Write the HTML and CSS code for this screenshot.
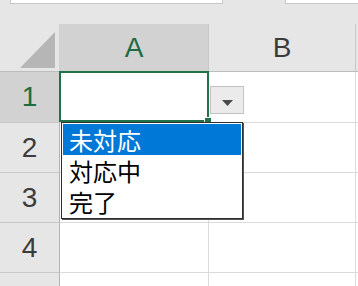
FILE: index.html
```html
<!DOCTYPE html>
<html>
  <head>
    <meta charset="utf-8" />
    <title>Sheet</title>
    <link rel="stylesheet" href="styles.css">
  </head>
  <body>
    <div class="toolbar">
      <div class="namebox"></div>
      <div class="formula"></div>
    </div>
    <div class="sheet">
      <div class="corner"><div class="corner-tri"></div></div>
      <div class="colhead active">A</div>
      <div class="colhead">B</div>
      <div class="colhead rest"></div>

      <div class="rowhead active">1</div>
      <div class="cell"></div>
      <div class="cell"></div>
      <div class="cell rest"></div>

      <div class="rowhead">2</div>
      <div class="cell"></div>
      <div class="cell"></div>
      <div class="cell rest"></div>

      <div class="rowhead">3</div>
      <div class="cell"></div>
      <div class="cell"></div>
      <div class="cell rest"></div>

      <div class="rowhead">4</div>
      <div class="cell"></div>
      <div class="cell"></div>
      <div class="cell rest"></div>

      <div class="rowhead"></div>
      <div class="cell"></div>
      <div class="cell"></div>
      <div class="cell rest"></div>

      <!-- overlays on A1 -->
      <div class="selection"><span class="handle"></span></div>
      <div class="dropbtn">
        <svg width="11" height="6" viewBox="0 0 11 6"><path d="M0 0h11L5.5 6z" fill="#4a4a4a"/></svg>
      </div>
      <ul class="droplist">
        <li class="picked">未対応</li>
        <li>対応中</li>
        <li>完了</li>
      </ul>
    </div>
  </body>
</html>
```

FILE: styles.css
```css
html,
body {
  margin: 0;
  padding: 0;
}
body {
  width: 358px;
  height: 286px;
  overflow: hidden;
  background: #e6e6e6;
  font-family: "Liberation Sans", Arial, sans-serif;
}
.toolbar {
  height: 24px;
  display: flex;
  align-items: flex-start;
}
.namebox {
  margin-left: 10px;
  width: 211px;
  height: 3px;
  background: #fff;
  border: 1px solid #c6c6c6;
  border-top: none;
}
.formula {
  margin-left: 62px;
  flex: 1;
  height: 3px;
  background: #fff;
  border: 1px solid #c6c6c6;
  border-top: none;
  border-right: none;
}
.sheet {
  position: relative;
  display: grid;
  grid-template-columns: 60px 149px 147px 1fr;
  grid-template-rows: 48px 51px 50px 50px 50px 50px;
}
.corner {
  position: relative;
  background: #e6e6e6;
  border-right: 1px solid #d0d0d0;
  border-bottom: 1px solid #bdbdbd;
}
.corner-tri {
  position: absolute;
  right: 4px;
  bottom: 3px;
  width: 0;
  height: 0;
  border-left: 35px solid transparent;
  border-bottom: 36px solid #b6b6b6;
}
.colhead {
  background: #e6e6e6;
  border-right: 1px solid #c8c8c8;
  border-bottom: 1px solid #bdbdbd;
  color: #3b3b3b;
  font-size: 28px;
  display: flex;
  align-items: center;
  justify-content: center;
}
.colhead.rest {
  border-right: none;
}
.colhead.active {
  background: #d2d2d2;
  color: #1e6b41;
  border-bottom: 1px solid #9c9c9c;
}
.rowhead {
  background: #e6e6e6;
  border-right: 1px solid #b4b4b4;
  border-bottom: 1px solid #c8c8c8;
  color: #3b3b3b;
  font-size: 28px;
  display: flex;
  align-items: center;
  justify-content: center;
}
.rowhead.active {
  background: #d2d2d2;
  color: #1e6b41;
}
.cell {
  background: #fff;
  border-right: 1px solid #dadada;
  border-bottom: 1px solid #dadada;
}
.cell.rest {
  border-right: none;
}
.selection {
  position: absolute;
  left: 59px;
  top: 47px;
  width: 146px;
  height: 47px;
  border: 2px solid #217346;
}
.handle {
  position: absolute;
  right: -5px;
  bottom: -5px;
  width: 6px;
  height: 6px;
  background: #217346;
  border: 1px solid #fff;
}
.dropbtn {
  position: absolute;
  left: 210px;
  top: 62px;
  width: 32px;
  height: 26px;
  background: #ebebeb;
  border: 1px solid #c2c2c2;
  display: flex;
  align-items: flex-end;
  justify-content: center;
}
.dropbtn svg {
  margin-bottom: 7px;
}
.droplist {
  position: absolute;
  left: 61px;
  top: 98px;
  width: 178px;
  margin: 0;
  padding: 1px;
  list-style: none;
  background: #fff;
  border: 1px solid #2e2e2e;
  box-shadow: 1px 1px 0 #555;
  font-family: "Noto Sans CJK JP", sans-serif;
  font-size: 24px;
}
.droplist li {
  height: 31px;
  line-height: 31px;
  padding-left: 6px;
  color: #000;
}
.droplist li.picked {
  background: #0078d7;
  color: #fff;
}
```
